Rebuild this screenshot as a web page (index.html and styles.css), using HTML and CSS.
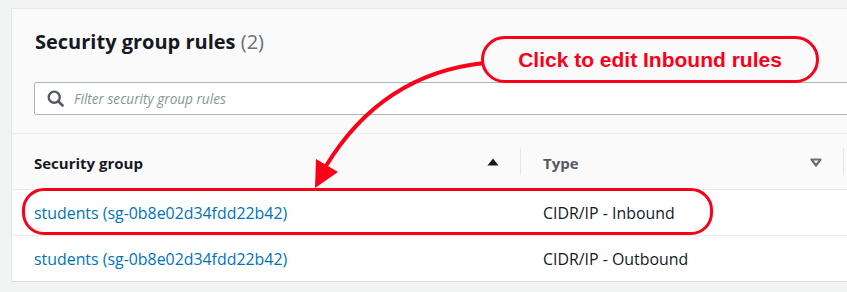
FILE: index.html
```html
<!DOCTYPE html>
<html lang="en">
<head>
<meta charset="utf-8">
<title>Security group rules</title>
<link rel="stylesheet" href="styles.css">
</head>
<body>
<div class="page">
  <div class="card">
    <div class="card-header">
      <h2 class="title">Security group rules <span class="count">(2)</span></h2>
      <div class="search">
        <svg class="search-icon" width="17" height="17" viewBox="0 0 16 16"><circle cx="6.8" cy="6.8" r="5.2" fill="none" stroke="#545b64" stroke-width="2.2"/><line x1="10.6" y1="10.6" x2="14.6" y2="14.6" stroke="#545b64" stroke-width="2.4" stroke-linecap="round"/></svg>
        <span class="placeholder">Filter security group rules</span>
      </div>
    </div>
    <div class="table">
      <div class="row head">
        <div class="cell col1 sorted">Security group
          <svg class="sort" width="12" height="8" viewBox="0 0 12 8"><polygon points="6,0.5 11.5,7.5 0.5,7.5" fill="#16191f"/></svg>
        </div>
        <div class="cell col2">Type
          <svg class="sort" width="12" height="9" viewBox="0 0 12 9"><polygon points="1.5,1.5 10.5,1.5 6,7.5" fill="none" stroke="#687078" stroke-width="2.2" stroke-linejoin="round"/></svg>
        </div>
      </div>
      <div class="row">
        <div class="cell col1"><a class="link" href="#">students (sg-0b8e02d34fdd22b42)</a></div>
        <div class="cell col2">CIDR/IP - Inbound</div>
      </div>
      <div class="row">
        <div class="cell col1"><a class="link" href="#">students (sg-0b8e02d34fdd22b42)</a></div>
        <div class="cell col2">CIDR/IP - Outbound</div>
      </div>
    </div>
  </div>

  <div class="callout">Click to edit Inbound rules</div>
  <div class="highlight"></div>
  <svg class="arrow" width="847" height="292" viewBox="0 0 847 292">
    <path d="M484 63 Q 382 74 326 166" fill="none" stroke="#fa0019" stroke-width="4"/>
    <polygon points="315,188 316,159 338,172" fill="#fa0019"/>
  </svg>
</div>
</body>
</html>
```

FILE: styles.css
```css
html, body {
  margin: 0;
  padding: 0;
}
body {
  background: #f2f3f3;
  width: 847px;
  height: 292px;
  overflow: hidden;
  font-family: "Open Sans", "Noto Sans", sans-serif;
  color: #16191f;
}
.page {
  position: relative;
  width: 847px;
  height: 292px;
  padding: 8px 0 0 11px;
  box-sizing: border-box;
}
.card {
  width: 900px;
  background: #fafafa;
  border: 1px solid #e4e7e7;
  border-bottom-color: #d5dbdb;
  border-right: none;
}
.card-header {
  padding: 20px 0 18px 22px;
}
.title {
  margin: 0;
  font-size: 20px;
  line-height: 26px;
  font-weight: 700;
  color: #16191f;
  padding-left: 1px;
}
.count {
  font-weight: 400;
  color: #687078;
}
.search {
  margin-top: 27px;
  height: 31px;
  border: 1px solid #aab7b8;
  border-radius: 2px;
  background: #fff;
  display: flex;
  align-items: center;
  padding-left: 12px;
  gap: 10px;
}
.search-icon {
  flex: none;
}
.placeholder {
  font-style: italic;
  font-size: 13.6px;
  color: #879596;
}
.table {
  border-top: 1px solid #eaeded;
}
.row {
  display: flex;
  height: 45px;
  border-top: 1px solid #eaeded;
  background: #fff;
  align-items: center;
  font-size: 15.9px;
}
.row.head {
  border-top: none;
  height: 55px;
  background: #fafafa;
  font-weight: 700;
  font-size: 15px;
  color: #545b64;
}
.cell {
  display: flex;
  align-items: center;
  box-sizing: border-box;
  height: 100%;
  position: relative;
}
.col1 {
  width: 509px;
  padding-left: 22px;
}
.col2 {
  width: 323px;
  padding-left: 22px;
}
.head .col1, .head .col2 {
  padding-top: 2px;
}
.head .cell::after {
  content: "";
  position: absolute;
  right: 0;
  top: 14px;
  height: 27px;
  border-right: 1px solid #e4e7e7;
}
.head .sort {
  position: absolute;
  right: 22px;
  top: 24px;
}
.sorted {
  color: #16191f;
}
.link {
  color: #0073bb;
  text-decoration: none;
}
.callout {
  position: absolute;
  left: 481px;
  top: 36px;
  width: 338px;
  height: 47px;
  box-sizing: border-box;
  border: 3.5px solid #fa0019;
  border-radius: 24px;
  display: flex;
  align-items: center;
  justify-content: center;
  font-family: "Liberation Sans", Arial, sans-serif;
  font-weight: 700;
  font-size: 21px;
  color: #fa0019;
}
.highlight {
  position: absolute;
  left: 22px;
  top: 188px;
  width: 691px;
  height: 47px;
  box-sizing: border-box;
  border: 3.5px solid #fa0019;
  border-radius: 22px;
}
.arrow {
  position: absolute;
  left: 0;
  top: 0;
  pointer-events: none;
}
```
